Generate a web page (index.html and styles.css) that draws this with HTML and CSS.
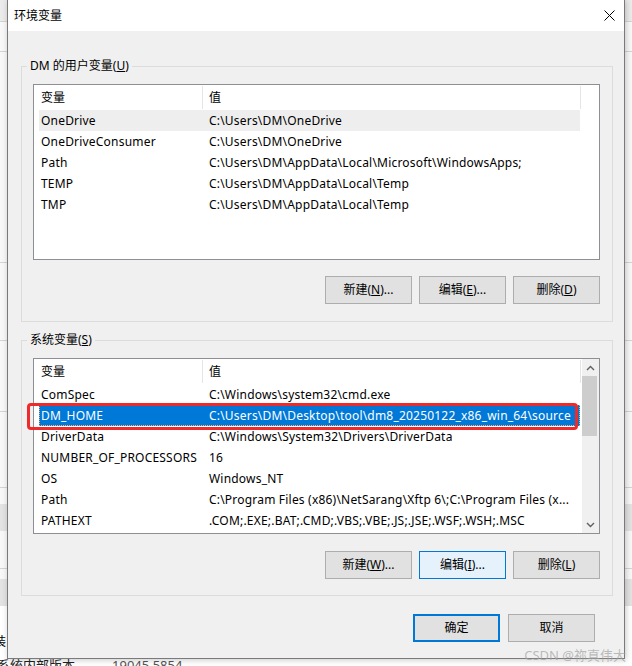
FILE: index.html
```html
<!DOCTYPE html>
<html lang="zh-CN">
<head>
<meta charset="utf-8">
<title>环境变量</title>
<link rel="stylesheet" href="styles.css">
</head>
<body>
<div class="desk">
  <div class="bgwin">
    <div class="bg-top"></div>
    <div class="bg-line"></div>
    <div class="bg-pane h29"></div>
    <div class="bg-line"></div>
    <div class="bg-pane h210"></div>
    <div class="bg-line"></div>
    <div class="bg-pane h77"></div>
    <div class="bg-line"></div>
    <div class="bg-pane h70"></div>
    <div class="bg-line"></div>
    <div class="bg-pane h75"></div>
    <div class="bg-line"></div>
    <div class="bg-pane h16"></div>
    <div class="bg-block h27"></div>
    <div class="bg-pane h37"></div>
    <div class="bg-line"></div>
    <div class="bg-pane h10"></div>
    <div class="bg-block h27"></div>
    <div class="bg-white h49"><span class="bg-cut">安装</span></div>
    <div class="bg-foot"><span class="bg-k">系统内部版本</span><span class="bg-v">19045.5854</span></div>
  </div>

  <div class="dialog">
    <div class="titlebar">
      <span class="title">环境变量</span>
      <svg class="close" width="11" height="11" viewBox="0 0 11 11"><path d="M0.5 0.5 L10.5 10.5 M10.5 0.5 L0.5 10.5" stroke="#000" stroke-width="1" fill="none"/></svg>
    </div>
    <div class="dbody">
      <div class="group">
        <div class="legend">DM 的用户变量(<u>U</u>)</div>
        <div class="list">
          <div class="lcontent">
            <div class="lhead"><div class="h1">变量</div><div class="h2">值</div></div>
            <div class="row hover"><div class="c1">OneDrive</div><div class="c2">C:\Users\DM\OneDrive</div></div>
            <div class="row"><div class="c1">OneDriveConsumer</div><div class="c2">C:\Users\DM\OneDrive</div></div>
            <div class="row"><div class="c1">Path</div><div class="c2">C:\Users\DM\AppData\Local\Microsoft\WindowsApps;</div></div>
            <div class="row"><div class="c1">TEMP</div><div class="c2">C:\Users\DM\AppData\Local\Temp</div></div>
            <div class="row"><div class="c1">TMP</div><div class="c2">C:\Users\DM\AppData\Local\Temp</div></div>
          </div>
        </div>
        <div class="btns">
          <button class="btn">新建(<u>N</u>)...</button>
          <button class="btn">编辑(<u>E</u>)...</button>
          <button class="btn">删除(<u>D</u>)</button>
        </div>
      </div>

      <div class="group g2">
        <div class="legend">系统变量(<u>S</u>)</div>
        <div class="list">
          <div class="lcontent">
            <div class="lhead"><div class="h1">变量</div><div class="h2">值</div></div>
            <div class="row"><div class="c1">ComSpec</div><div class="c2">C:\Windows\system32\cmd.exe</div></div>
            <div class="row sel"><div class="c1">DM_HOME</div><div class="c2">C:\Users\DM\Desktop\tool\dm8_20250122_x86_win_64\source</div></div>
            <div class="row"><div class="c1">DriverData</div><div class="c2">C:\Windows\System32\Drivers\DriverData</div></div>
            <div class="row"><div class="c1">NUMBER_OF_PROCESSORS</div><div class="c2">16</div></div>
            <div class="row"><div class="c1">OS</div><div class="c2">Windows_NT</div></div>
            <div class="row"><div class="c1">Path</div><div class="c2">C:\Program Files (x86)\NetSarang\Xftp 6\;C:\Program Files (x...</div></div>
            <div class="row"><div class="c1">PATHEXT</div><div class="c2">.COM;.EXE;.BAT;.CMD;.VBS;.VBE;.JS;.JSE;.WSF;.WSH;.MSC</div></div>
          </div>
          <div class="sbar">
            <div class="sarrow"><svg width="9" height="6" viewBox="0 0 9 6"><path d="M1 5 L4.5 1.5 L8 5" stroke="#606060" stroke-width="1.4" fill="none"/></svg></div>
            <div class="strack"><div class="sthumb"></div></div>
            <div class="sarrow"><svg width="9" height="6" viewBox="0 0 9 6"><path d="M1 1 L4.5 4.5 L8 1" stroke="#606060" stroke-width="1.4" fill="none"/></svg></div>
          </div>
        </div>
        <div class="btns">
          <button class="btn">新建(<u>W</u>)...</button>
          <button class="btn focus">编辑(<u>I</u>)...</button>
          <button class="btn">删除(<u>L</u>)</button>
        </div>
      </div>

      <div class="footer">
        <button class="btn default">确定</button>
        <button class="btn">取消</button>
      </div>
    </div>
    <div class="redmark"></div>
  </div>

  <div class="watermark">CSDN @祢真伟大</div>
</div>
</body>
</html>
```
FILE: styles.css
```css
* { box-sizing: border-box; }
html, body { margin: 0; padding: 0; }
body {
  width: 632px;
  height: 666px;
  overflow: hidden;
  font-family: "Noto Sans", "Noto Sans CJK SC", sans-serif;
  font-size: 12px;
  color: #000;
  background: #f7f7f7;
}
.desk { position: relative; width: 632px; height: 666px; overflow: hidden; }

/* background window (behind the dialog) */
.bgwin { position: absolute; left: 0; top: 0; width: 632px; height: 666px; display: flex; flex-direction: column; }
.bgwin > div { flex-shrink: 0; }
.bg-top { height: 21px; background: #ebebeb; }
.bg-line { height: 1px; background: #d4d4d4; }
.bg-pane { background: #f8f8f8; }
.bg-block { background: #e3e3e3; }
.bg-white { background: #fff; }
.h10 { height: 10px; } .h16 { height: 16px; } .h27 { height: 27px; } .h29 { height: 29px; }
.h37 { height: 37px; } .h49 { height: 49px; } .h70 { height: 70px; } .h75 { height: 75px; } .h77 { height: 77px; } .h210 { height: 210px; }
.bg-cut { display: block; margin: 29px 0 0 -18px; line-height: 14px; }
.bgwin > .bg-foot { flex: 1 1 auto; background: #fff; font-size: 13px; line-height: 16px; padding-top: 2px; white-space: nowrap; color: #222; }
.bg-k { margin-left: -3px; }
.bg-v { margin-left: 37px; color: #555; }

/* dialog window */
.dialog {
  position: absolute;
  left: 7px;
  top: -1px;
  width: 618px;
  height: 660px;
  border: 1px solid #7a7a7a;
  background: #f0f0f0;
  box-shadow: 1px 1px 6px rgba(0,0,0,0.22);
  display: flex;
  flex-direction: column;
}
.titlebar {
  height: 31px;
  background: #fff;
  display: flex;
  align-items: center;
  justify-content: space-between;
  padding: 0 9px 0 6px;
}
.title { font-size: 12px; line-height: 16px; }
.close { display: block; margin-top: -1px; }

.dbody { flex: 1; padding: 35px 0 0 13px; display: flex; flex-direction: column; }

.group {
  width: 592px;
  height: 256px;
  border: 1px solid #dcdcdc;
  display: flex;
  flex-direction: column;
}
.g2 { margin-top: 18px; }
.legend {
  align-self: flex-start;
  height: 16px;
  line-height: 16px;
  margin: -9px 0 0 5px;
  padding: 0 3px;
  background: #f0f0f0;
  white-space: nowrap;
}

.list {
  margin: 10px 12px 0 11px;
  height: 176px;
  border: 1px solid #8e8f94;
  background: #fff;
  display: flex;
}
.lcontent { flex: 1; overflow: hidden; }
.lhead { display: flex; height: 25px; line-height: 25px; width: 547px; }
.h1 { width: 169px; padding-left: 7px; border-right: 1px solid #e5e5e5; margin: 1px 0; line-height: 23px; }
.h2 { width: 378px; padding-left: 6px; border-right: 1px solid #e5e5e5; margin: 1px 0; line-height: 23px; }
.row { display: flex; margin-left: 5px; width: 541px; height: 21px; line-height: 21px; white-space: nowrap; letter-spacing: 0.2px; }
.c1 { width: 163px; padding-left: 2px; overflow: hidden; }
.c2 { flex: 1; padding-left: 7px; overflow: hidden; }
.row.hover { background: #eeeeee; }
.row.sel { background: #0078d7; color: #fff; outline: 1px dotted #f7b36b; outline-offset: -1px; }

.sbar { width: 17px; background: #f0f0f0; display: flex; flex-direction: column; margin-left: 1px; }
.sarrow { height: 17px; display: flex; align-items: center; justify-content: center; }
.strack { flex: 1; }
.sthumb { width: 15px; height: 60px; background: #cdcdcd; }

.btns { display: flex; justify-content: flex-end; gap: 7px; padding-right: 12px; margin-top: 16px; }
.g2 .btns { margin-top: 17px; }
.btn {
  width: 87px;
  height: 28px;
  padding: 0;
  background: #e1e1e1;
  border: 1px solid #adadad;
  font-family: "Noto Sans", "Noto Sans CJK SC", sans-serif;
  font-size: 12px;
  color: #000;
  line-height: 26px;
}
.btn.focus { background: #e5f1fb; border-color: #0078d7; }
.btn.default { border: 2px solid #0078d7; line-height: 24px; }

.footer { display: flex; justify-content: flex-end; gap: 8px; padding-right: 29px; margin-top: 18px; }

.redmark {
  position: absolute;
  left: 19px;
  top: 403px;
  width: 551px;
  height: 27px;
  border: 3px solid #ee2a2a;
  border-radius: 4px;
}

.watermark {
  position: absolute;
  right: 6px;
  top: 647px;
  font-size: 13px;
  line-height: 16px;
  color: rgba(160,160,160,0.7);
  white-space: nowrap;
}
```
